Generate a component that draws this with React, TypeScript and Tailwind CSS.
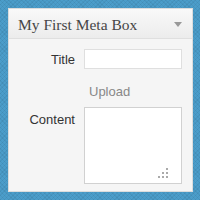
export default function App() {
  return (
    <div className="w-[200px] h-[200px] p-2 bg-[#4b9dca] bg-[repeating-linear-gradient(45deg,rgba(0,0,0,0.05)_0_1px,transparent_1px_3px),repeating-linear-gradient(-45deg,rgba(0,0,0,0.05)_0_1px,transparent_1px_3px)]">
      {/* Meta box */}
      <div className="w-[185px] h-[184px] border border-[#dcdcdc] bg-[#f5f5f5] flex flex-col">
        <div className="h-[30px] flex items-center justify-between pl-[9px] pr-[10px] border-b border-[#dfdfdf] bg-[linear-gradient(#f9f9f9,#ececec)]">
          <span className="text-[15.5px] text-[#464646] font-['Liberation_Serif',serif] leading-none pt-[2px]">
            My First Meta Box
          </span>
          <svg width="8" height="5" viewBox="0 0 8 5" className="mt-[1px]">
            <path d="M0 0h8L4 5z" fill="#999" />
          </svg>
        </div>

        <div className="grid grid-cols-[66px_98px] gap-x-[9px] pt-[10px] font-['Liberation_Sans',sans-serif] text-[13px] text-[#333]">
          <label className="text-right leading-[20px] mt-[1px]">Title</label>
          <input
            type="text"
            className="h-[20px] border border-[#dfdfdf] bg-white outline-none"
          />

          <span />
          <span className="mt-[14px] mb-[7px] pl-[5px] leading-[16px] text-[#888]">Upload</span>

          <label className="text-right leading-[16px] mt-[5px]">Content</label>
          <div className="relative h-[77px] border border-[#d1d1d1] bg-white">
            {/* resize grip */}
            <svg width="10" height="10" viewBox="0 0 10 10" className="absolute right-[13px] bottom-[5px]">
              <rect x="8" y="0" width="2" height="2" fill="#aaa" />
              <rect x="4" y="4" width="2" height="2" fill="#aaa" />
              <rect x="8" y="4" width="2" height="2" fill="#aaa" />
              <rect x="0" y="8" width="2" height="2" fill="#aaa" />
              <rect x="4" y="8" width="2" height="2" fill="#aaa" />
              <rect x="8" y="8" width="2" height="2" fill="#aaa" />
            </svg>
          </div>
        </div>
      </div>
    </div>
  );
}
